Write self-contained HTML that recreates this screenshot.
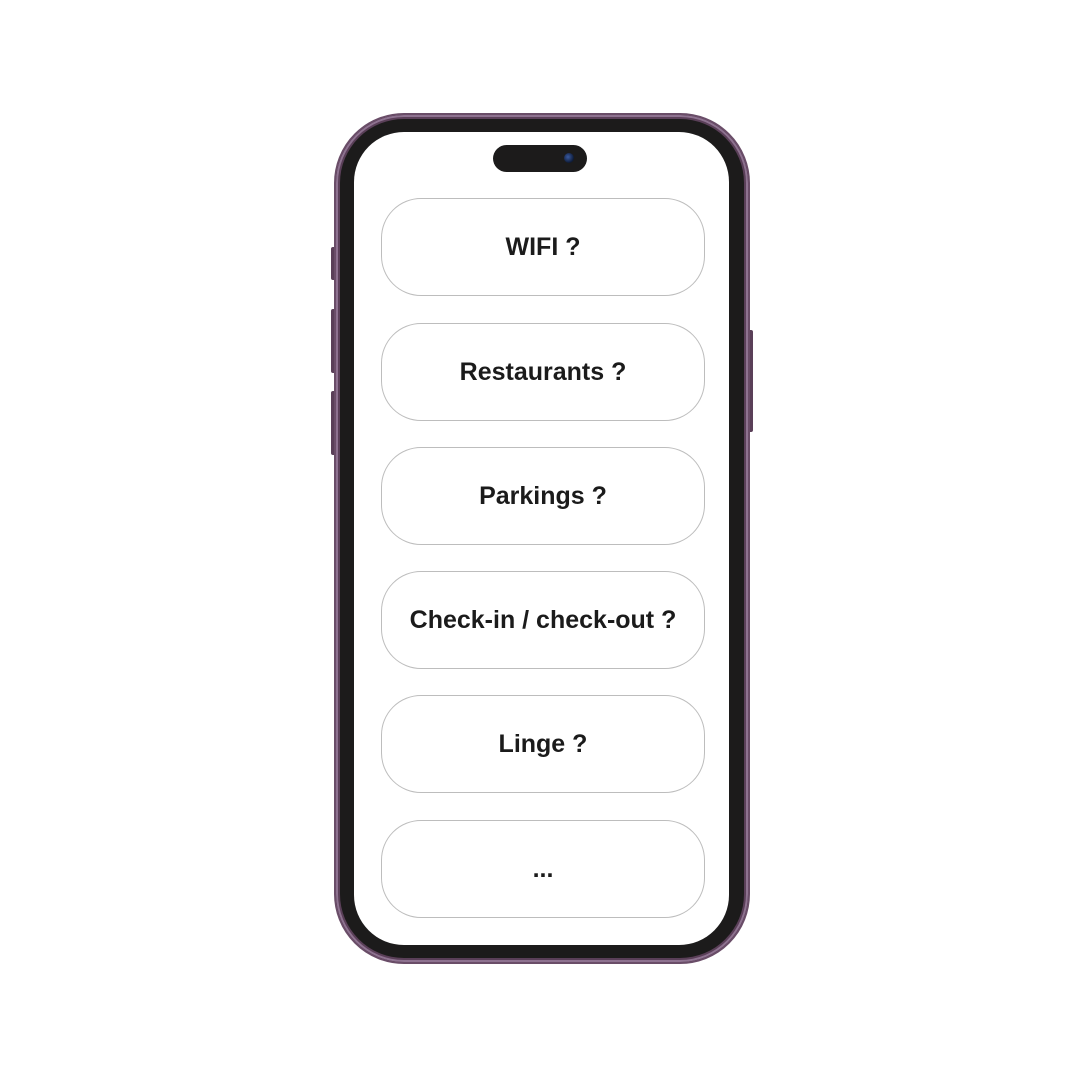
<!DOCTYPE html>
<html><head><style>
body{margin:0;width:1080px;height:1080px;background:#fff;position:relative;overflow:hidden;font-family:"Liberation Sans",Arial,Helvetica,sans-serif}
.abs{position:absolute}
.phone{left:334px;top:113px;width:412px;height:847px;border-radius:70px;background:#1c1b1b;border:2px solid #6a4d68;box-shadow:inset 0 0 0 2px #8e7290,inset 0 0 0 4px #5a3f58}
.screen{left:354px;top:132px;width:375px;height:813px;border-radius:50px;background:#fff}
.notch{left:493px;top:145px;width:94px;height:27px;border-radius:14px;background:#1c1b1b}
.cam{left:564px;top:153px;width:10px;height:10px;border-radius:50%;background:radial-gradient(circle at 40% 40%,#3a5aa0,#0d1a35 70%)}
.btn{left:381px;width:322px;height:96px;border:1px solid #bdbdbd;border-radius:40px;background:#fff;display:flex;align-items:center;justify-content:center;font-family:"Liberation Sans",Arial,sans-serif;font-weight:bold;font-size:25px;color:#1b1b1b}
.sb{background:#5a3f58;border-radius:2px}
</style></head><body>
<div class="abs sb" style="left:331px;top:247px;width:5px;height:33px"></div>
<div class="abs sb" style="left:331px;top:309px;width:5px;height:64px"></div>
<div class="abs sb" style="left:331px;top:391px;width:5px;height:64px"></div>
<div class="abs sb" style="left:746px;top:330px;width:7px;height:102px"></div>
<div class="abs phone"></div>
<div class="abs screen"></div>
<div class="abs notch"></div>
<div class="abs cam"></div>
<div class="abs btn" style="top:198px">WIFI ?</div>
<div class="abs btn" style="top:323px">Restaurants ?</div>
<div class="abs btn" style="top:447px">Parkings ?</div>
<div class="abs btn" style="top:571px">Check-in / check-out ?</div>
<div class="abs btn" style="top:695px">Linge ?</div>
<div class="abs btn" style="top:820px">...</div>
</body></html>
